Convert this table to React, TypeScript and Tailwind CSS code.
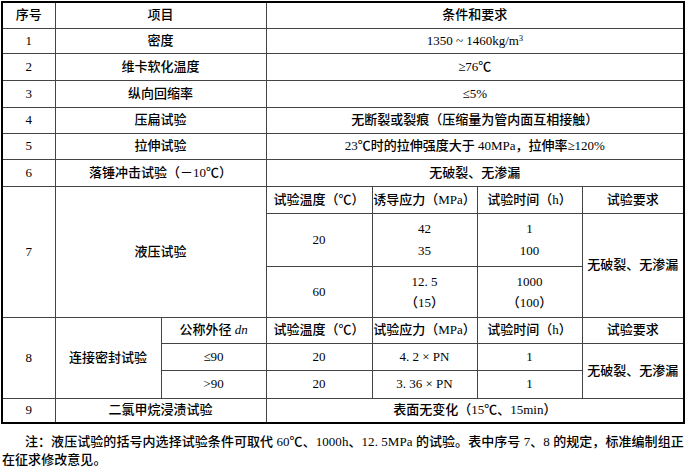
const FONT = { fontFamily: '"Liberation Serif", "Noto Sans CJK SC", serif' };

const cell = 'border border-[#444] p-0 text-center align-middle';

export default function App() {
  return (
    <div className="bg-white w-[687px] h-[472px] text-[13px] font-medium text-black leading-[18px]" style={FONT}>
      <table className="table-fixed border-collapse border-2 border-black w-[682px] ml-[1px] mt-[1px]">
        <colgroup>
          <col className="w-[53px]" />
          <col className="w-[106px]" />
          <col className="w-[105px]" />
          <col className="w-[106px]" />
          <col className="w-[105px]" />
          <col className="w-[105px]" />
          <col className="w-[102px]" />
        </colgroup>
        <tbody>
          <tr className="h-[26px]">
            <td className={cell}>序号</td>
            <td className={cell} colSpan={2}>项目</td>
            <td className={cell} colSpan={4}>条件和要求</td>
          </tr>
          <tr className="h-[25px]">
            <td className={cell}>1</td>
            <td className={cell} colSpan={2}>密度</td>
            <td className={cell} colSpan={4}>
              1350 ~ 1460kg/m<sup className="text-[8px]">3</sup>
            </td>
          </tr>
          <tr className="h-[27px]">
            <td className={cell}>2</td>
            <td className={cell} colSpan={2}>维卡软化温度</td>
            <td className={cell} colSpan={4}>≥76℃</td>
          </tr>
          <tr className="h-[27px]">
            <td className={cell}>3</td>
            <td className={cell} colSpan={2}>纵向回缩率</td>
            <td className={cell} colSpan={4}>≤5%</td>
          </tr>
          <tr className="h-[26px]">
            <td className={cell}>4</td>
            <td className={cell} colSpan={2}>压扁试验</td>
            <td className={cell} colSpan={4}>无断裂或裂痕（压缩量为管内面互相接触）</td>
          </tr>
          <tr className="h-[26px]">
            <td className={cell}>5</td>
            <td className={cell} colSpan={2}>拉伸试验</td>
            <td className={cell} colSpan={4}>23℃时的拉伸强度大于 40MPa，拉伸率≥120%</td>
          </tr>
          <tr className="h-[27px]">
            <td className={cell}>6</td>
            <td className={cell} colSpan={2}>落锤冲击试验（－10℃）</td>
            <td className={cell} colSpan={4}>无破裂、无渗漏</td>
          </tr>

          {/* 7 液压试验 */}
          <tr className="h-[27px]">
            <td className={cell} rowSpan={3}>7</td>
            <td className={cell} colSpan={2} rowSpan={3}>液压试验</td>
            <td className={cell}>试验温度（℃）</td>
            <td className={cell}>诱导应力（MPa）</td>
            <td className={cell}>试验时间（h）</td>
            <td className={cell}>试验要求</td>
          </tr>
          <tr className="h-[53px]">
            <td className={cell}>20</td>
            <td className={`${cell} leading-[22px]`}>42<br />35</td>
            <td className={`${cell} leading-[22px]`}>1<br />100</td>
            <td className={cell} rowSpan={2}>无破裂、无渗漏</td>
          </tr>
          <tr className="h-[51px]">
            <td className={cell}>60</td>
            <td className={`${cell} leading-[21px]`}>12. 5<br />（15）</td>
            <td className={`${cell} leading-[21px]`}>1000<br />（100）</td>
          </tr>

          {/* 8 连接密封试验 */}
          <tr className="h-[26px]">
            <td className={cell} rowSpan={3}>8</td>
            <td className={cell} rowSpan={3}>连接密封试验</td>
            <td className={cell}>
              公称外径 <i>dn</i>
            </td>
            <td className={cell}>试验温度（℃）</td>
            <td className={cell}>试验应力（MPa）</td>
            <td className={cell}>试验时间（h）</td>
            <td className={cell}>试验要求</td>
          </tr>
          <tr className="h-[27px]">
            <td className={cell}>≤90</td>
            <td className={cell}>20</td>
            <td className={cell}>4. 2 × PN</td>
            <td className={cell}>1</td>
            <td className={cell} rowSpan={2}>无破裂、无渗漏</td>
          </tr>
          <tr className="h-[28px]">
            <td className={cell}>&gt;90</td>
            <td className={cell}>20</td>
            <td className={cell}>3. 36 × PN</td>
            <td className={cell}>1</td>
          </tr>

          <tr className="h-[25px]">
            <td className={cell}>9</td>
            <td className={cell} colSpan={2}>二氯甲烷浸渍试验</td>
            <td className={cell} colSpan={4}>表面无变化（15℃、15min）</td>
          </tr>
        </tbody>
      </table>

      <p className="mt-[9px] pl-[2px] indent-[23px] whitespace-nowrap tracking-[0.06px]">
        注：液压试验的括号内选择试验条件可取代 60℃、1000h、12. 5MPa 的试验。表中序号 7、8 的规定，标准编制组正
        <br />
        在征求修改意见。
      </p>
    </div>
  );
}
